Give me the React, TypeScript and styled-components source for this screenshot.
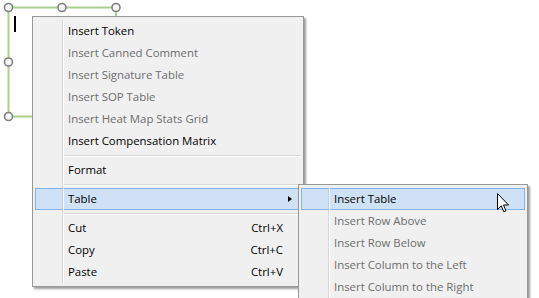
import React from "react";
import styled, { createGlobalStyle, css } from "styled-components";

const GlobalStyle = createGlobalStyle`
  html, body { margin: 0; padding: 0; background: #ffffff; }
  body { font-family: "Segoe UI", "Open Sans", "Noto Sans", sans-serif; }
`;

const Stage = styled.div`
  position: relative;
  width: 539px;
  height: 298px;
  overflow: hidden;
  background: #ffffff;
  padding: 16px 0 0 32px;
  box-sizing: border-box;
`;

const SelectionFrame = styled.div`
  position: absolute;
  left: 0;
  top: 0;
  width: 140px;
  height: 140px;
`;

const Caret = styled.div`
  position: absolute;
  left: 14px;
  top: 16px;
  width: 2px;
  height: 16px;
  background: #000;
`;

const Menu = styled.div<{ $width: number }>`
  position: relative;
  width: ${(p) => p.$width}px;
  box-sizing: border-box;
  display: flex;
  flex-direction: column;
  padding: 3px 2px 3px 2px;
  background: #f0f0f0;
  border: 1px solid #979797;
  box-shadow: 2px 2px 2px rgba(0, 0, 0, 0.38);
  font-size: 11.4px;
  z-index: 2;

  &::after {
    content: "";
    position: absolute;
    left: 29px;
    top: 3px;
    bottom: 3px;
    width: 1px;
    background: rgba(170, 170, 170, 0.35);
    box-shadow: 1px 0 0 rgba(255, 255, 255, 0.8);
    pointer-events: none;
  }
`;

const SubMenuAnchor = styled.div`
  position: absolute;
  left: calc(100% - 2px);
  top: -5px;
  z-index: 3;
`;

const Item = styled.div<{ $disabled?: boolean; $active?: boolean }>`
  position: relative;
  height: 22px;
  box-sizing: border-box;
  display: flex;
  align-items: center;
  padding: 0 17px 2px 32px;
  color: ${(p) => (p.$disabled ? "#6d6d6d" : "#000000")};
  border: 1px solid transparent;
  white-space: nowrap;
  ${(p) =>
    p.$active &&
    css`
      background: #cfe2f5;
      border-color: #84b2e6;
    `}
`;

const Label = styled.span`
  flex: 1;
`;

const Shortcut = styled.span`
  color: #000;
`;

const SubArrow = styled.span`
  position: absolute;
  right: 8px;
  top: 7px;
  width: 0;
  height: 0;
  border-top: 3.5px solid transparent;
  border-bottom: 3.5px solid transparent;
  border-left: 4px solid #000;
`;

const Separator = styled.div`
  height: 7px;
  display: flex;
  align-items: center;
  padding-left: 28px;

  &::before {
    content: "";
    flex: 1;
    height: 1px;
    background: #d7d7d7;
    box-shadow: 0 1px 0 #ffffff;
  }
`;

const Pointer = styled.svg`
  position: absolute;
  left: 497px;
  top: 193px;
  z-index: 5;
`;

type ItemEntry = {
  kind: "item";
  label: string;
  disabled?: boolean;
  active?: boolean;
  shortcut?: string;
  sub?: ItemEntry[];
};
type Entry = ItemEntry | { kind: "sep" };

const tableEntries: ItemEntry[] = [
  { kind: "item", label: "Insert Table", active: true },
  { kind: "item", label: "Insert Row Above", disabled: true },
  { kind: "item", label: "Insert Row Below", disabled: true },
  { kind: "item", label: "Insert Column to the Left", disabled: true },
  { kind: "item", label: "Insert Column to the Right", disabled: true },
];

const mainEntries: Entry[] = [
  { kind: "item", label: "Insert Token" },
  { kind: "item", label: "Insert Canned Comment", disabled: true },
  { kind: "item", label: "Insert Signature Table", disabled: true },
  { kind: "item", label: "Insert SOP Table", disabled: true },
  { kind: "item", label: "Insert Heat Map Stats Grid", disabled: true },
  { kind: "item", label: "Insert Compensation Matrix" },
  { kind: "sep" },
  { kind: "item", label: "Format" },
  { kind: "sep" },
  { kind: "item", label: "Table", active: true, sub: tableEntries },
  { kind: "sep" },
  { kind: "item", label: "Cut", shortcut: "Ctrl+X" },
  { kind: "item", label: "Copy", shortcut: "Ctrl+C" },
  { kind: "item", label: "Paste", shortcut: "Ctrl+V" },
];

function MenuList({ entries, width }: { entries: Entry[]; width: number }) {
  return (
    <Menu $width={width}>
      {entries.map((e, i) =>
        e.kind === "sep" ? (
          <Separator key={i} />
        ) : (
          <Item key={i} $disabled={e.disabled} $active={e.active}>
            <Label>{e.label}</Label>
            {e.shortcut && <Shortcut>{e.shortcut}</Shortcut>}
            {e.sub && (
              <>
                <SubArrow />
                <SubMenuAnchor>
                  <MenuList entries={e.sub} width={230} />
                </SubMenuAnchor>
              </>
            )}
          </Item>
        )
      )}
    </Menu>
  );
}

const Handle = ({ cx, cy }: { cx: number; cy: number }) => (
  <circle cx={cx} cy={cy} r={4} fill="#f7f7f7" stroke="#7f7f7f" strokeWidth={1.6} />
);

export default function App() {
  return (
    <>
      <GlobalStyle />
      <Stage>
        <SelectionFrame>
          <svg width={140} height={140} viewBox="0 0 140 140">
            <rect x={8.5} y={7.5} width={107.5} height={109} fill="none" stroke="#a9d18e" strokeWidth={2} />
            <Handle cx={8.5} cy={7.5} />
            <Handle cx={62} cy={7.5} />
            <Handle cx={116} cy={7.5} />
            <Handle cx={8.5} cy={62} />
            <Handle cx={8.5} cy={116.5} />
          </svg>
          <Caret />
        </SelectionFrame>
        <MenuList entries={mainEntries} width={272} />
        <Pointer width={13} height={21} viewBox="0 0 13 21">
          <path
            d="M0.5 0.5 L0.5 16.5 L4.3 12.8 L6.8 18.8 L9 17.9 L6.5 12 L11.5 12 Z"
            fill="#ffffff"
            stroke="#000000"
            strokeWidth={1}
            strokeLinejoin="round"
          />
        </Pointer>
      </Stage>
    </>
  );
}
